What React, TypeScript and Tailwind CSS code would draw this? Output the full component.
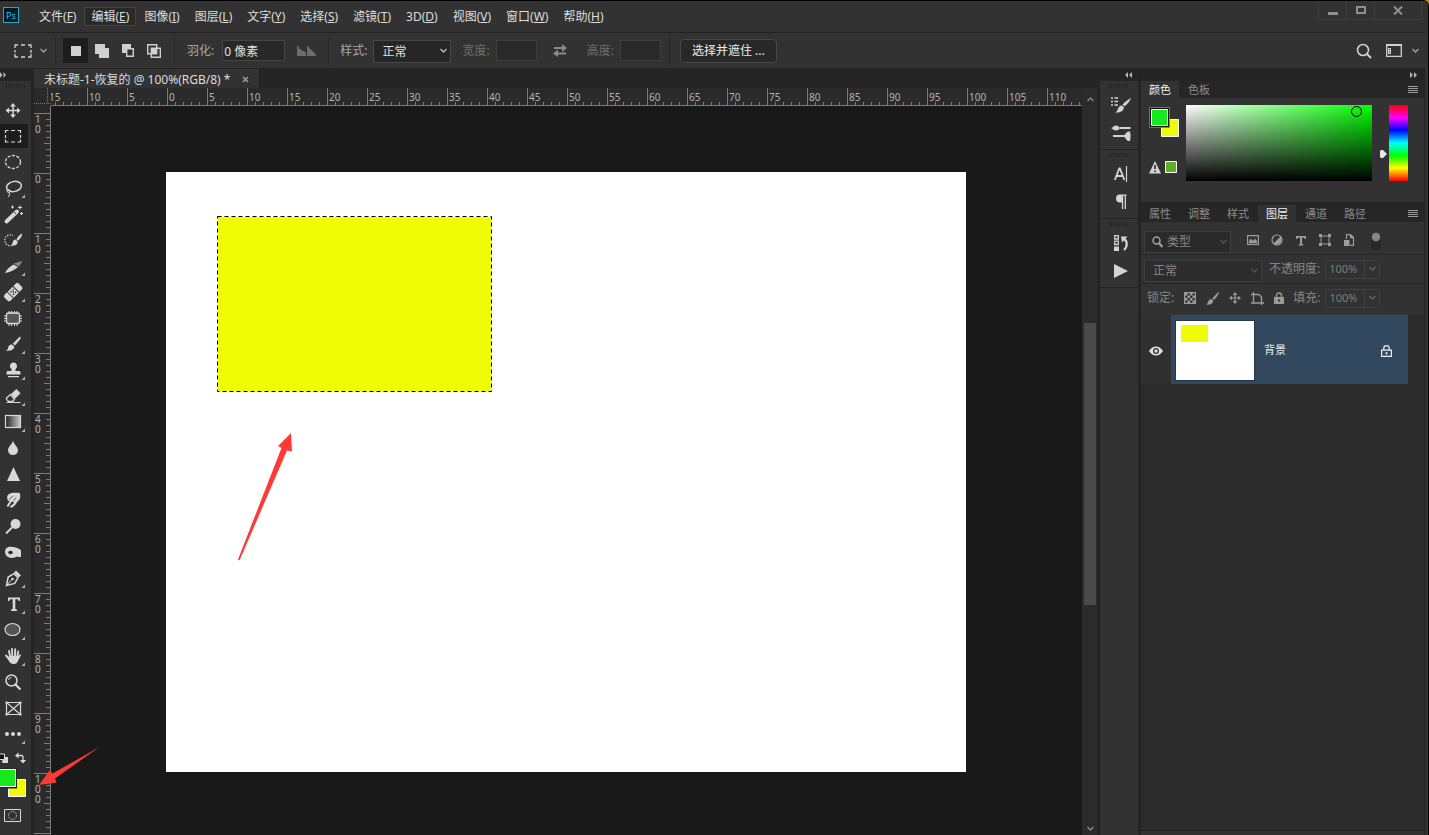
import React from "react";

type IconProps = { w: number; h: number; className?: string; children: React.ReactNode };

function Icon({ w, h, className = "", children }: IconProps) {
  return (
    <svg width={w} height={h} viewBox={`0 0 ${w} ${h}`} className={`block shrink-0 ${className}`} fill="none" stroke="currentColor" aria-hidden="true">
      {children}
    </svg>
  );
}

const solid = { fill: "currentColor", stroke: "none" };

function Chevron({ className = "" }: { className?: string }) {
  return (
    <Icon w={9} h={6} className={className}>
      <path d="M1.5 1l3 3 3-3" strokeWidth="1.3" />
    </Icon>
  );
}

const menus: [string, string][] = [
  ["文件", "F"],
  ["编辑", "E"],
  ["图像", "I"],
  ["图层", "L"],
  ["文字", "Y"],
  ["选择", "S"],
  ["滤镜", "T"],
  ["3D", "D"],
  ["视图", "V"],
  ["窗口", "W"],
  ["帮助", "H"],
];

function MenuBar() {
  return (
    <header className="flex h-8 shrink-0 items-start border-t border-black">
      <div className="ml-[3px] mt-[6px] flex h-4 w-4 items-center justify-center border border-[#21a9bf] bg-[#04192b] text-[9px] leading-none text-[#2cc0dc]">
        Ps
      </div>
      <nav className="ml-[13px] mt-[6px] flex gap-px">
        {menus.map(([name, key]) => (
          <button
            key={key}
            className={`h-[19px] border px-[6px] text-xs leading-4 whitespace-nowrap ${
              key === "E" ? "border-[#434343] bg-[#292929]" : "border-transparent"
            }`}
          >
            {name}(<u>{key}</u>)
          </button>
        ))}
      </nav>
      <div className="ml-auto mr-[3px] flex h-[19px] border-x border-b border-[#3e3e3e] text-[#8f8f8f]">
        <button aria-label="最小化" className="flex w-7 items-center justify-center border-r border-[#3e3e3e]">
          <Icon w={10} h={10}>
            <path d="M0 7h10v3H0z" {...solid} />
          </Icon>
        </button>
        <button aria-label="最大化" className="flex w-7 items-center justify-center border-r border-[#3e3e3e]">
          <Icon w={10} h={8}>
            <path d="M1 1h8v6H1z" strokeWidth="2" />
          </Icon>
        </button>
        <button aria-label="关闭" className="flex w-[46px] items-center justify-center">
          <Icon w={10} h={9}>
            <path d="M1 .5l8 8M9 .5l-8 8" strokeWidth="2" />
          </Icon>
        </button>
      </div>
    </header>
  );
}

function Separator({ className = "" }: { className?: string }) {
  return <div className={`h-7 w-px bg-[#272727] ${className}`} />;
}

function OptionsBar() {
  return (
    <section className="flex h-9 shrink-0 items-center border-t border-[#222] text-xs text-[#d0d0d0]">
      <button aria-label="矩形选框" className="ml-[14px] flex items-center">
        <Icon w={18} h={14}>
          <path d="M1 4V1h3M7 1h4M14 1h3v3M17 6v3M17 10v3h-3M11 13H7M4 13H1v-3M1 8.500V6" strokeWidth="1.3" />
        </Icon>
        <Chevron className="ml-[7px] text-[#a0a0a0]" />
      </button>
      <Separator className="ml-[7px]" />
      <div className="ml-[7px] flex items-center gap-px">
        <button aria-label="新选区" className="flex h-[25px] w-[25px] items-center justify-center bg-[#1d1d1d]">
          <Icon w={10} h={10}>
            <path d="M0 0h10v10H0z" {...solid} />
          </Icon>
        </button>
        <button aria-label="添加到选区" className="flex h-[25px] w-[25px] items-center justify-center">
          <Icon w={14} h={14}>
            <path d="M0 0h10v4h4v10H4v-4H0z" {...solid} />
          </Icon>
        </button>
        <button aria-label="从选区减去" className="flex h-[25px] w-[25px] items-center justify-center">
          <Icon w={12} h={13}>
            <path d="M0 0h9v4H4v5H0z" {...solid} />
            <path d="M4.700 4.700h6.600v7.600H4.700z" strokeWidth="1.400" />
          </Icon>
        </button>
        <button aria-label="与选区交叉" className="flex h-[25px] w-[25px] items-center justify-center">
          <Icon w={14} h={14}>
            <path d="M.7.700h9v9h-9zM4.300 4.300h9v9h-9z" strokeWidth="1.400" />
            <path d="M5 5h5v5H5z" {...solid} />
          </Icon>
        </button>
      </div>
      <Separator className="ml-2" />
      <label htmlFor="feather" className="ml-3 text-[#a8a8a8]">
        羽化:
      </label>
      <input id="feather" defaultValue="0 像素" className="ml-2 h-[21px] w-[63px] border border-[#454545] bg-[#282828] px-px text-xs text-[#e0e0e0]" />
      <Icon w={20} h={12} className="ml-3 text-[#6d6d6d]">
        <path d="M0 11V0l2 2v2h2l1 2h2l2 2v3zM10 11V1l2 1 1 2 2 1 1 2 2 1 1 3z" {...solid} />
      </Icon>
      <Separator className="ml-[11px]" />
      <label htmlFor="style" className="ml-[11px] text-[#a8a8a8]">
        样式:
      </label>
      <div className="relative ml-[6px] flex items-center">
        <select id="style" className="mt-0.5 h-[23px] w-[78px] appearance-none border border-[#484848] bg-[#262626] px-2 text-xs text-[#e0e0e0]">
          <option>正常</option>
        </select>
        <Chevron className="pointer-events-none absolute right-[3px] text-[#bbb]" />
      </div>
      <label htmlFor="width" className="ml-[11px] text-[#6d6d6d]">
        宽度:
      </label>
      <input id="width" className="ml-[6px] h-[21px] w-[41px] border border-[#3e3e3e] bg-[#292929]" />
      <button aria-label="高度和宽度互换" className="ml-4 text-[#8a8a8a]">
        <Icon w={14} h={13}>
          <path d="M1 4h9M4 9.500h9" strokeWidth="1.800" />
          <path d="M9 0l5 4-5 4zM5 5.500L0 9.500l5 3.500z" {...solid} />
        </Icon>
      </button>
      <label htmlFor="height" className="ml-5 text-[#6d6d6d]">
        高度:
      </label>
      <input id="height" className="ml-[6px] h-[21px] w-[41px] border border-[#3e3e3e] bg-[#292929]" />
      <Separator className="ml-2" />
      <button className="ml-[10px] h-6 rounded-sm border border-[#484848] bg-[#282828] px-[11px] text-xs whitespace-nowrap text-[#eee]">选择并遮住 ...</button>
      <button aria-label="搜索" className="ml-auto">
        <Icon w={16} h={16}>
          <circle cx="7" cy="7" r="5.500" strokeWidth="1.600" />
          <path d="M11 11l4 4" strokeWidth="2" />
        </Icon>
      </button>
      <button aria-label="工作区" className="mr-[5px] ml-[14px] flex items-center">
        <Icon w={16} h={13}>
          <path d="M.7 1h14.600v11.300H.700z" strokeWidth="1.300" />
          <path d="M0 0h16v2H0zM2 4h3v6H2z" {...solid} />
          <path d="M3.500 5v1M3.500 7.500v1" stroke="#323232" />
        </Icon>
        <Chevron className="ml-[9px] text-[#a0a0a0]" />
      </button>
    </section>
  );
}

const brush = (
  <>
    <path d="M20.500 6c.6.500 0 1.500-.6 2.400L15 14.600 12.800 12.700 18.600 6.800C19.300 6.100 20 5.600 20.500 6z" {...solid} />
    <path d="M12 13.600l2.300 2c-.2 3-3 4.800-8.800 4 2-.7 2.300-1.500 2.700-3.200.5-2 2-3.200 3.800-2.800z" {...solid} />
  </>
);

type Tool = { label: string; flyout?: boolean; art: React.ReactNode };

const tools: Tool[] = [
  {
    label: "移动工具",
    art: (
      <>
        <path d="M13 8v11M7.500 13.500h11" strokeWidth="1.500" />
        <path d="M13 6l3 3.500h-6zM13 21l3-3.500h-6zM5.500 13.500L9 10.500v6zM20.500 13.500L17 10.500v6z" {...solid} />
      </>
    ),
  },
  {
    label: "矩形选框工具",
    art: <path d="M5.500 10V7.500h3M11 7.500h4M17.500 7.500h3V10M20.500 12v3M20.500 16.500V19h-3M15 19h-4M8.500 19h-3v-2.500M5.500 15v-3" strokeWidth="1.200" />,
  },
  { label: "椭圆选框工具", art: <ellipse cx="13" cy="13" rx="7.500" ry="6.500" strokeWidth="1.300" strokeDasharray="3 1.500" /> },
  {
    label: "套索工具",
    flyout: true,
    art: (
      <>
        <ellipse cx="14" cy="11.500" rx="7.500" ry="5" strokeWidth="1.500" transform="rotate(-12 14 11.500)" />
        <circle cx="8.500" cy="16" r="1.500" />
        <path d="M8.500 17c1.500 1 1.200 3-.2 5" />
      </>
    ),
  },
  {
    label: "魔棒工具",
    art: (
      <>
        <path d="M6.500 20.500L17 10.500" strokeWidth="3.800" strokeLinecap="round" />
        <path d="M14 11l2 2" stroke="#444" />
        <path d="M11 6h3M12.500 4.500v3M18 6.500h4M20 4.500v4M20 12.500h3M21.500 11v3" />
      </>
    ),
  },
  {
    label: "快速选择工具",
    art: (
      <>
        <path d="M12 18.500a5.500 5.500 0 1 1 1-10" strokeDasharray="1.300 1.300" strokeWidth="1.300" />
        <path d="M22 6.500c.5 2-1.500 5-4 7.300l-1.600-1.600C18 9.500 20.500 7 22 6.500zM15.500 12.500l2.300 2.200c-.2 3-2.800 4.300-7 3.800 1.600-1 1.500-2 2-3.500.5-1.700 1.500-2.500 2.700-2.500z" {...solid} />
      </>
    ),
  },
  {
    label: "切片工具",
    flyout: true,
    art: (
      <>
        <path d="M5 20c1.500-3 4-6 8.500-8.500L18 14c-4 3.500-8 5-13 6z" {...solid} />
        <path d="M13.500 10.500L22.500 8l-3.500 5.500z" fill="#888" stroke="none" />
      </>
    ),
  },
  {
    label: "修复画笔工具",
    flyout: true,
    art: (
      <g transform="rotate(-45 13 13)">
        <path d="M5 9h3.500v8.500H5a2 2 0 0 1-2-2V11a2 2 0 0 1 2-2zM17.500 9H21a2 2 0 0 1 2 2v4.500a2 2 0 0 1-2 2h-3.500zM9.500 9h7v8.500h-7z" {...solid} />
        <path d="M11 11.500h1.500M14 11.500h1.500M11 15h1.500M14 15h1.500M12.500 13.250h1.500" stroke="#333" strokeWidth="1.400" />
      </g>
    ),
  },
  {
    label: "修补工具",
    art: (
      <>
        <rect x="6.500" y="8" width="13" height="10.500" rx="2" fill="#555" strokeWidth="1.300" />
        <path d="M9 6v3M11.500 6v3M14.500 6v3M17 6v3M9 18v3M11.500 18v3M14.500 18v3M17 18v3M4 11h3M4 13.500h3M4 16h3M19 11h3M19 13.500h3M19 16h3" />
      </>
    ),
  },
  { label: "画笔工具", flyout: true, art: brush },
  {
    label: "仿制图章工具",
    flyout: true,
    art: (
      <path d="M13.500 5.500a3.500 3.500 0 0 1 2.500 6c-.6.700-.8 1.600-.6 2.500H19c1 0 1.500.6 1.500 1.500v2h-14v-2c0-.9.600-1.500 1.500-1.500h3.600c.2-.9 0-1.800-.6-2.500a3.500 3.500 0 0 1 2.500-6zM8 19h11v1.300H8z" {...solid} />
    ),
  },
  {
    label: "橡皮擦工具",
    flyout: true,
    art: (
      <>
        <path d="M11 11l5.500-5 4 4.200-5.700 5.800z" {...solid} />
        <path d="M10.500 11.500l-3.700 3.300c-.6.600-.6 1.200 0 1.800l1.800 1.900h4l1.800-2.100z" strokeWidth="1.300" />
        <path d="M6.500 19.500h14" />
      </>
    ),
  },
  {
    label: "渐变工具",
    flyout: true,
    art: (
      <>
        <defs>
          <linearGradient id="toolGradient">
            <stop offset="0" stopColor="#222" />
            <stop offset="1" stopColor="#ccc" />
          </linearGradient>
        </defs>
        <rect x="5.500" y="6.500" width="15" height="12" fill="url(#toolGradient)" strokeWidth="1.200" />
      </>
    ),
  },
  { label: "模糊工具", art: <path d="M13 5.500c.5 3.500 5 6 5 9.800a5 4.800 0 0 1-10 0c0-3.800 4.500-6.300 5-9.800z" {...solid} /> },
  { label: "锐化工具", art: <path d="M13.500 6L20 20H7z" {...solid} /> },
  {
    label: "涂抹工具",
    art: (
      <>
        <path d="M7.500 8.500C9 6.500 11.500 5.500 14 5.800c2 .2 4.500-.3 6 .7.700 3 .3 6-2 7.800l-4 1.200-3.500-1.500C8 14.500 6.500 12 7.500 8.500z" {...solid} />
        <path d="M12 12l-4.500 7.500M16.500 13c-.5 3-3 5.500-6 7" strokeWidth="2" />
        <path d="M9 12.500l4-3.500M13.500 14l2.500-3.500" stroke="#444" strokeWidth=".8" />
      </>
    ),
  },
  {
    label: "减淡工具",
    art: (
      <>
        <circle cx="15.500" cy="11" r="5" {...solid} />
        <path d="M12 14.500L6 20.500" strokeWidth="1.800" />
      </>
    ),
  },
  {
    label: "海绵工具",
    art: (
      <>
        <path d="M6.500 9C9 7 13 7.500 15.500 8.500c2.500.5 4.500 1.500 5.500 3v6.500c-1.500.3-3 0-4-.5-2 1.500-6 2-9 .5-3-1.500-4-6.500-1.500-9z" {...solid} />
        <ellipse cx="10.500" cy="13.500" rx="2.300" ry="1.700" fill="#2a2a2a" stroke="none" />
      </>
    ),
  },
  {
    label: "钢笔工具",
    flyout: true,
    art: (
      <>
        <path d="M6.500 20.500l1.700-8.500 5.800-3.300 4 4-3.300 5.700z" strokeWidth="1.500" />
        <path d="M6.500 20.500l5.500-6" />
        <circle cx="12.500" cy="14" r="1.300" {...solid} />
        <path d="M14 7.500l2-2 5 5-2.200 1.800z" {...solid} />
      </>
    ),
  },
  { label: "文字工具", flyout: true, art: <path d="M8 6.500h12V10h-1.200c-.2-1.300-.7-1.800-1.800-1.800h-1.700v9.300c0 .8.500 1 1.700 1v1.500h-6v-1.500c1.200 0 1.700-.2 1.700-1V8.200H11c-1.100 0-1.600.5-1.800 1.800H8z" {...solid} /> },
  { label: "椭圆工具", flyout: true, art: <ellipse cx="12.500" cy="12.500" rx="7.500" ry="6" fill="#555" strokeWidth="1.200" /> },
  {
    label: "抓手工具",
    flyout: true,
    art: (
      <>
        <path d="M9 8l1.200 6M12 6l.3 8M15.200 6.300L15 14M18.200 8.500L17 15M6 12.500l3.500 4" strokeWidth="1.900" strokeLinecap="round" />
        <path d="M9 13h9.200l1.500-1.500c.8-.5 1.500.2 1 1L18 18c-.8 1.800-2 3-4 3s-3.500-.5-4.500-2L7.500 15.500z" {...solid} />
      </>
    ),
  },
  {
    label: "缩放工具",
    art: (
      <>
        <circle cx="11.500" cy="11.500" r="5.500" strokeWidth="1.500" />
        <path d="M8.500 11a3 3 0 0 1 3-2.500" />
        <path d="M15.500 15.500l5 5" strokeWidth="2.200" />
      </>
    ),
  },
  {
    label: "图框工具",
    art: (
      <>
        <path d="M6.500 7.500h14v12h-14zM6.500 7.500l14 12M20.500 7.500l-14 12" strokeWidth="1.200" />
        <path d="M5.500 6.500h2v2h-2zM19.500 6.500h2v2h-2zM5.500 18.500h2v2h-2zM19.500 18.500h2v2h-2z" {...solid} />
      </>
    ),
  },
  {
    label: "编辑工具栏",
    flyout: true,
    art: (
      <>
        <circle cx="7" cy="13" r="2" {...solid} />
        <circle cx="13" cy="13" r="2" {...solid} />
        <circle cx="19" cy="13" r="2" {...solid} />
      </>
    ),
  },
];

function Grip() {
  return <div className="h-1 w-5 bg-[repeating-linear-gradient(90deg,#242424_0_1px,transparent_1px_2px)]" />;
}

function Toolbar() {
  return (
    <aside className="flex w-[34px] shrink-0 flex-col border-r-[3px] border-[#242424]">
      <div className="flex h-3 shrink-0 items-center bg-[#252525] text-[#b5b5b5]">
        <Icon w={7} h={6}>
          <path d="M0 0l2.500 3L0 6zM3.500 0L6 3 3.500 6z" {...solid} />
        </Icon>
      </div>
      <div className="flex h-4 shrink-0 justify-center pt-[3px]">
        <Grip />
      </div>
      {tools.map((tool, i) => (
        <button key={tool.label} aria-label={tool.label} className="flex h-[26px] w-7 shrink-0 items-center">
          <span className={`block w-7 ${i === 1 ? "bg-[#1c1c1c]" : ""}`}>
            <svg width="28" height="24" viewBox="0 1 28 24" fill="none" stroke="currentColor" className="block text-[#d8d8d8]" aria-hidden="true">
              {tool.art}
              {tool.flyout && <path d="M25 19.500V23h-3.500z" fill="#b0b0b0" stroke="none" />}
            </svg>
          </span>
        </button>
      ))}
      <svg width="28" height="84" viewBox="0 747 28 84" fill="none" stroke="#d8d8d8" className="block shrink-0" role="img" aria-label="前景色和背景色">
        <path d="M3 757h5v6H2z" fill="#d8d8d8" stroke="none" />
        <path d="M-1 754h5.500v5.500H-1z" fill="#111" />
        <path d="M18 755.500h3.500c1 0 1.500.5 1.500 1.500v4" strokeWidth="1.300" />
        <path d="M15 755.500l3.500-3v6zM23 763.500l-3-3.500h6z" fill="#d8d8d8" stroke="none" />
        <path d="M8.500 779.500h17v17h-17z" fill="#eefb04" stroke="#fff" />
        <path d="M-1 768.500h18v20H-1z" fill="#222" stroke="none" />
        <path d="M-1 769.500h16.500v17H-1z" fill="#18e81e" stroke="#fff" />
        <path d="M4.500 809.500h16v12h-16z" />
        <circle cx="12.500" cy="815.500" r="4" strokeDasharray="1.200 1.200" />
      </svg>
    </aside>
  );
}

const topLabels = [15, 10, 5, 0, 5, 10, 15, 20, 25, 30, 35, 40, 45, 50, 55, 60, 65, 70, 75, 80, 85, 90, 95, 100, 105, 110];
const sideLabels = ["10", "0", "10", "20", "30", "40", "50", "60", "70", "80", "90", "100", ""];

function DocumentArea() {
  return (
    <main className="flex min-w-0 flex-1 flex-col bg-[#252525]">
      <div className="flex h-[19px] shrink-0">
        <div className="flex items-center border-r border-[#1f1f1f] bg-[#323232] px-[10px] pt-0.5 text-xs whitespace-nowrap text-[#dcdcdc]">
          未标题-1-恢复的 @ 100%(RGB/8) *
          <button aria-label="关闭文档" className="ml-3 text-[#9a9a9a]">
            <Icon w={7} h={7}>
              <path d="M1 1l5 5M6 1L1 6" strokeWidth="1.700" />
            </Icon>
          </button>
        </div>
      </div>
      <div className="flex min-h-0 flex-1">
        <div className="flex min-w-0 flex-1 flex-col">
          <div className="flex h-[18px] shrink-0 bg-[#2a2a2a]">
            <div className="flex w-[17px] shrink-0 flex-col items-end justify-end">
              <div className="h-full w-1 border-l border-dotted border-[#777]" />
              <div className="h-1 w-full border-t border-dotted border-[#777]" />
            </div>
            <div className="flex min-w-0 flex-1 overflow-hidden border-b border-[#7c7c7c]">
              <div className="-ml-1 flex">
                {topLabels.map((n, i) => (
                  <div key={i} className="flex w-10 shrink-0 flex-col justify-between border-l border-[#7c7c7c] text-[10px] leading-[14px] text-[#b4b4b4]">
                    <span className="pt-0.5 pl-px">{n}</span>
                    <span className="-mt-1 -ml-px block h-[3px] bg-[repeating-linear-gradient(90deg,#7c7c7c_0_1px,transparent_1px_8px)]" />
                  </div>
                ))}
              </div>
            </div>
          </div>
          <div className="flex min-h-0 flex-1">
            <div className="w-[17px] shrink-0 overflow-hidden border-r border-[#7c7c7c] bg-[#2a2a2a] pt-[7px]">
              {sideLabels.map((n, i) => (
                <div key={i} className="flex h-[60px] justify-between border-t border-[#7c7c7c] text-[10px] leading-[10px] text-[#b4b4b4]">
                  <span className="ml-px w-[7px] break-all">{n}</span>
                  <span className="-mt-px flex h-[60px] flex-col items-end">
                    <span className="block h-[30px] w-1 bg-[repeating-linear-gradient(180deg,#7c7c7c_0_1px,transparent_1px_6px)]" />
                    <span className="block h-px w-[6px] bg-[#7c7c7c]" />
                    <span className="block h-[29px] w-1 bg-[repeating-linear-gradient(180deg,transparent_0_5px,#7c7c7c_5px_6px)]" />
                  </span>
                </div>
              ))}
            </div>
            <div className="min-w-0 flex-1 overflow-hidden bg-[#191919] pt-[66px] pl-[115px]">
              <div className="relative h-[600px] w-[800px] bg-white pt-11 pl-[51px]">
                <svg width="275" height="176" viewBox="0 0 275 176" className="block" role="img" aria-label="选区">
                  <rect width="275" height="176" fill="#eefc04" />
                  <rect x=".5" y=".5" width="274" height="175" fill="none" stroke="#fff" />
                  <rect x=".5" y=".5" width="274" height="175" fill="none" stroke="#000" strokeDasharray="4 3" />
                </svg>
                <svg width="56" height="130" viewBox="0 0 56 130" className="absolute top-[260px] left-[71px]" role="img" aria-label="指向选区的箭头">
                  <path d="M54 1L41 14l3.500 2L1 127.500l1.500 1L50 18.500l5 1z" fill="#fd3a38" />
                </svg>
              </div>
            </div>
          </div>
        </div>
        <div className="flex w-[18px] shrink-0 flex-col items-center border-r-2 border-[#202020] bg-[#2b2b2b] pt-2 pb-[3px] text-[#8a8a8a]">
          <Chevron className="shrink-0 rotate-180" />
          <div className="mt-[221px] h-[282px] w-3 shrink bg-[#4a4a4a]" />
          <Chevron className="mt-auto shrink-0" />
        </div>
      </div>
    </main>
  );
}

function DockButton({ label, children }: { label: string; children: React.ReactNode }) {
  return (
    <button aria-label={label} className="flex h-7 w-full items-center justify-center pl-[3px] text-[#d4d4d4]">
      {children}
    </button>
  );
}

function IconDock() {
  return (
    <aside className="flex w-[41px] shrink-0 flex-col border-r-[3px] border-[#242424]">
      <div className="flex h-3 items-center justify-end bg-[#252525] pr-[6px] text-[#b5b5b5]">
        <Icon w={8} h={6}>
          <path d="M4 0L1 3l3 3zM8 0L5 3l3 3z" {...solid} />
        </Icon>
      </div>
      <div className="flex flex-col items-center border-b border-[#222] pt-[3px] pb-[2px]">
        <Grip />
        <div className="h-[3px]" />
        <DockButton label="画笔设置">
          <Icon w={22} h={18}>
            <path d="M1 2h2M1 5.500h2M1 9h2M4.500 2H8M4.500 5.500H8M4.500 9H8" strokeWidth="1.500" />
            <path d="M21 2c-.5 2-3 5.500-6.500 8.500l-2-2C15.500 5.500 19 3 21 2zM12 9.500l2 2c-.5 3.500-4 5.500-9 5 2-1 2.300-2 3-3.800.8-2 2-3.400 4-3.200z" {...solid} />
          </Icon>
        </DockButton>
        <DockButton label="画笔">
          <Icon w={20} h={16}>
            <path d="M0 3C2 2.500 3 .5 5 .5S8.500 2 9 3c-.5 1.500-2 2.500-4 2.500S2 4 0 3z" {...solid} />
            <path d="M9 3h10.500M2 11h11" strokeWidth="2" />
            <path d="M12 11c2-1 3-3.500 5-4.500h2c.8 2.500.8 7 0 9.500h-2c-2-1-3-4-5-5z" {...solid} />
          </Icon>
        </DockButton>
      </div>
      <div className="flex flex-col items-center border-b border-[#222] pt-[3px] pb-[2px]">
        <Grip />
        <div className="h-[3px]" />
        <DockButton label="字符">
          <Icon w={14} h={16}>
            <path d="M.8 14L5.300 2.500h.6L10.400 14M2.500 10h6.200" strokeWidth="1.800" />
            <path d="M12.500 0v16" strokeWidth="1.200" />
          </Icon>
        </DockButton>
        <DockButton label="段落">
          <Icon w={12} h={16}>
            <path d="M6 .5h5.500v1.300H11V15H9.700V1.800H8.200V15H6.900V8.500H5a4 4 0 0 1 0-8z" {...solid} />
          </Icon>
        </DockButton>
      </div>
      <div className="flex flex-col items-center border-b border-[#222] pt-[3px] pb-[2px]">
        <Grip />
        <div className="h-[3px]" />
        <DockButton label="历史记录">
          <Icon w={16} h={18}>
            <path d="M1.700 1.700h3.600v3.300H1.700zM1.700 7.200h3.600v3.300H1.700z" strokeWidth="1.300" />
            <path d="M1 12.500h5V17H1z" {...solid} />
            <path d="M10.500 4.500c4 2.500 4.500 7.500.5 11.500" strokeWidth="2.200" />
            <path d="M8 2.500h6.500L9 8.500z" {...solid} />
          </Icon>
        </DockButton>
        <DockButton label="动作">
          <Icon w={14} h={14}>
            <path d="M0 0l14 7-14 7z" {...solid} />
          </Icon>
        </DockButton>
      </div>
    </aside>
  );
}

function PanelTabs({ tabs, active }: { tabs: string[]; active: string }) {
  return (
    <div className="flex h-[17px] shrink-0 items-stretch gap-px bg-[#262626] text-[11px] text-[#8c8c8c]">
      {tabs.map((t) => (
        <button key={t} className={`px-2 pt-px leading-4 whitespace-nowrap ${t === active ? "bg-[#323232] text-[#f0f0f0]" : ""}`}>
          {t}
        </button>
      ))}
      <button aria-label="面板菜单" className="mr-[6px] ml-auto text-[#9a9a9a]">
        <Icon w={10} h={8}>
          <path d="M0 .5h10M0 2.500h10M0 4.500h10M0 6.500h10" />
        </Icon>
      </button>
    </div>
  );
}

function ColorPanel() {
  return (
    <section className="shrink-0 border-b-[3px] border-[#242424]">
      <PanelTabs tabs={["颜色", "色板"]} active="颜色" />
      <div className="flex h-[104px] items-start pt-[7px] pl-2">
        <svg width="31" height="76" viewBox="0 0 31 76" className="block shrink-0" role="img" aria-label="当前颜色">
          <path d="M12.500 14.500h17v17h-17z" fill="#eefb04" stroke="#fff" />
          <path d="M.500 2.500h20v20H.500z" fill="#111" stroke="#888" strokeWidth=".8" />
          <path d="M2.500 4.500h16v16h-16z" fill="#18e81e" stroke="#fff" />
          <path d="M6 56l6 12.500H0z" fill="#d4d4d4" />
          <path d="M6 60v4M6 65.500v1.500" stroke="#222" strokeWidth="1.600" />
          <path d="M16.500 56.500h11v11h-11z" fill="#5cb024" stroke="#fff" />
        </svg>
        <div className="relative ml-[6px] h-[76px] min-w-0 flex-1 bg-[linear-gradient(to_top,#000,transparent),linear-gradient(to_right,#fff,#00ff00)]">
          <div className="absolute top-px right-[10px] h-[11px] w-[11px] rounded-full border border-black" />
        </div>
        <Icon w={7} h={8} className="mt-[45px] ml-2 text-[#e8e8e8]">
          <path d="M1 0h2l4 4-4 4H1L0 7V1z" {...solid} />
        </Icon>
        <div className="mr-4 ml-0.5 h-[76px] w-[19px] shrink-0 bg-[linear-gradient(to_bottom,#f00,#f0f_17%,#00f_33%,#0ff_50%,#0f0_67%,#ff0_83%,#f00)]" />
      </div>
    </section>
  );
}

function PercentField({ id }: { id: string }) {
  return (
    <div className="ml-[5px] flex h-[19px] w-[55px] shrink-0 rounded-sm border border-[#414141] text-[#7c7c7c]">
      <input id={id} defaultValue="100%" className="w-[38px] pl-[3px] text-[11px]" />
      <button aria-label="展开" className="flex flex-1 items-center justify-center border-l border-[#414141] text-[#666]">
        <Chevron />
      </button>
    </div>
  );
}

function LayersPanel() {
  return (
    <section className="flex min-h-0 flex-1 flex-col text-xs text-[#868686]">
      <PanelTabs tabs={["属性", "调整", "样式", "图层", "通道", "路径"]} active="图层" />
      <div className="flex h-8 shrink-0 items-center pl-[3px]">
        <div className="relative mt-[7px] flex items-center">
          <Icon w={11} h={12} className="pointer-events-none absolute left-2 text-[#a0a0a0]">
            <circle cx="4.500" cy="4.500" r="3.500" strokeWidth="1.500" />
            <path d="M7 7l3.500 4" strokeWidth="2" />
          </Icon>
          <select aria-label="图层类型" className="h-[22px] w-[87px] appearance-none border border-[#3e3e3e] bg-[#2a2a2a] pl-[22px] text-xs">
            <option>类型</option>
          </select>
          <Chevron className="pointer-events-none absolute right-[3px] text-[#555]" />
        </div>
        <div className="mt-1 ml-4 flex items-center gap-3 text-[#9c9c9c]">
          <button aria-label="像素图层滤镜">
            <Icon w={12} h={10}>
              <path d="M.6.600h10.800v8.800H.600z" strokeWidth="1.200" />
              <path d="M2 8V6l2-2.500L6 6l2-2.500L10 6v2z" {...solid} />
            </Icon>
          </button>
          <button aria-label="调整图层滤镜">
            <Icon w={12} h={12}>
              <circle cx="6" cy="6" r="5" strokeWidth="1.200" />
              <path d="M9.500 2.500A5 5 0 0 1 2.500 9.500z" {...solid} />
            </Icon>
          </button>
          <button aria-label="文字图层滤镜">
            <Icon w={12} h={11}>
              <path d="M1 1h10v3H9.800c-.2-1-.5-1.300-1.500-1.300H7V8.500c0 .6.400.8 1.300.8v1.200H3.700V9.300c.9 0 1.300-.2 1.300-.8V2.700H3.700c-1 0-1.300.3-1.500 1.300H1z" {...solid} />
            </Icon>
          </button>
          <button aria-label="形状图层滤镜">
            <Icon w={12} h={12}>
              <path d="M2 2h8v8H2z" />
              <path d="M0 0h3v3H0zM9 0h3v3H9zM0 9h3v3H0zM9 9h3v3H9z" {...solid} />
            </Icon>
          </button>
          <button aria-label="智能对象滤镜">
            <Icon w={12} h={12}>
              <path d="M3.500 5V.6h4l3 3v7.800H7M7.500.600v3h3" strokeWidth="1.200" />
              <path d="M1 6h5.500v6H1z" {...solid} />
            </Icon>
          </button>
        </div>
        <button aria-label="打开或关闭滤镜" className="ml-4 self-start pt-[10px]">
          <Icon w={10} h={18}>
            <path d="M.5 3.500h9v14h-9z" fill="#282828" stroke="#262626" />
            <circle cx="5" cy="5" r="4.300" {...solid} />
          </Icon>
        </button>
      </div>
      <div className="flex h-[29px] shrink-0 items-center border-t border-[#262626] pl-[3px]">
        <div className="relative mt-1 flex items-center">
          <select aria-label="混合模式" className="h-[22px] w-[118px] appearance-none border border-[#3e3e3e] bg-[#2c2c2c] pl-2 text-xs">
            <option>正常</option>
          </select>
          <Chevron className="pointer-events-none absolute right-[3px] text-[#555]" />
        </div>
        <label htmlFor="opacity" className="ml-[7px]">
          不透明度:
        </label>
        <PercentField id="opacity" />
      </div>
      <div className="flex h-8 shrink-0 items-center border-t border-[#262626] pb-[3px] pl-[6px]">
        <span>锁定:</span>
        <div className="ml-[10px] flex items-center gap-[10px] text-[#9a9a9a]">
          <button aria-label="锁定透明像素">
            <Icon w={12} h={12}>
              <path d="M.6.600h10.800v10.800H.600z" strokeWidth="1.200" />
              <path d="M1 1h2.500v2.500H1zM6 1h2.500v2.500H6zM3.500 3.500H6V6H3.500zM8.500 3.500H11V6H8.500zM1 6h2.500v2.500H1zM6 6h2.500v2.500H6zM3.500 8.500H6V11H3.500zM8.500 8.500H11V11H8.500z" {...solid} />
            </Icon>
          </button>
          <button aria-label="锁定图像像素">
            <Icon w={13} h={13}>
              <path d="M13 0c0 2-2.500 5.500-5 8L6.300 6.500C8.500 4 11 1 13 0zM5.500 7L7.300 8.800C7 12 4 13 0 12.800 1.500 12 1.500 11 2.200 9.500 3 7.800 4 6.800 5.500 7z" {...solid} />
            </Icon>
          </button>
          <button aria-label="锁定位置">
            <Icon w={12} h={12}>
              <path d="M6 2v8M2 6h8" strokeWidth="1.200" />
              <path d="M6 0l2.300 3H3.700zM6 12l2.300-3H3.700zM0 6l3-2.300v4.600zM12 6L9 3.700v4.600z" {...solid} />
            </Icon>
          </button>
          <button aria-label="锁定画板">
            <Icon w={13} h={13}>
              <path d="M0 2.500h8M2.500 0v11M0 11h13M10.500 5.500V13M8 2.500l3 3" strokeWidth="1.300" />
            </Icon>
          </button>
          <button aria-label="锁定全部">
            <Icon w={10} h={12}>
              <path d="M2.500 6V3.500a2.500 2.500 0 0 1 5 0V6" strokeWidth="1.400" />
              <path fillRule="evenodd" d="M0 5h10v7H0zM4 7.500h2v2H4z" {...solid} />
            </Icon>
          </button>
        </div>
        <label htmlFor="fill" className="ml-[9px]">
          填充:
        </label>
        <PercentField id="fill" />
      </div>
      <div className="flex min-h-0 flex-1 flex-col bg-[#2b2b2b] pr-4">
        <div className="flex h-[69px] shrink-0">
          <button aria-label="切换图层可见性" className="flex w-[30px] items-center justify-center bg-[#303030] pt-0.5 text-[#e0e0e0]">
            <Icon w={14} h={10}>
              <path fillRule="evenodd" d="M0 5c2-3.200 4.500-4.500 7-4.500S12 1.800 14 5c-2 3.200-4.500 4.500-7 4.500S2 8.200 0 5zm7-3a3 3 0 1 0 0 6 3 3 0 0 0 0-6z" {...solid} />
              <circle cx="7" cy="5" r="1.700" {...solid} />
            </Icon>
          </button>
          <div className="flex flex-1 items-center bg-[#31485f] pt-0.5 pl-1 text-[#eee]">
            <div className="h-[61px] w-20 border border-[#25384a] bg-white pt-1 pl-[5px]">
              <div className="h-[17px] w-[27px] bg-[#eefc04]" />
            </div>
            <span className="ml-[9px] text-[11px]">背景</span>
            <Icon w={11} h={12} className="mr-4 ml-auto">
              <path d="M.6 5.100h9.800v6.300H.600zM2.800 5V3.300a2.700 2.700 0 0 1 5.400 0V5" strokeWidth="1.200" />
              <path d="M4.500 7.300h2v2h-2z" {...solid} />
            </Icon>
          </div>
        </div>
      </div>
      <div className="h-[5px] shrink-0 border-t border-[#222] bg-[#323232]" />
    </section>
  );
}

export default function App() {
  return (
    <div className="h-screen min-h-[835px] bg-[#a8961c]">
      <div className="relative flex h-full flex-col overflow-hidden rounded-tr-md border-r border-black bg-[#323232] pr-[3px] font-['Noto_Sans','Noto_Sans_CJK_SC',sans-serif] text-[#dedede]">
        <MenuBar />
        <OptionsBar />
        <div className="relative flex min-h-0 flex-1 border-t border-r border-[#222]">
          <Toolbar />
          <DocumentArea />
          <IconDock />
          <div className="flex w-[283px] shrink-0 flex-col">
            <div className="flex h-3 shrink-0 items-center justify-end bg-[#252525] pr-[6px] text-[#b5b5b5]">
              <Icon w={8} h={6}>
                <path d="M0 0l3 3-3 3zM4 0l3 3-3 3z" {...solid} />
              </Icon>
            </div>
            <ColorPanel />
            <LayersPanel />
          </div>
          <svg width="62" height="40" viewBox="0 0 62 40" className="absolute top-[677px] left-[38px]" role="img" aria-label="指向前景色的箭头">
            <path d="M1 39L12 24l2.500 3.500L61.500 1 17 32.500l1.500 4z" fill="#fd3a38" />
          </svg>
        </div>
      </div>
    </div>
  );
}
